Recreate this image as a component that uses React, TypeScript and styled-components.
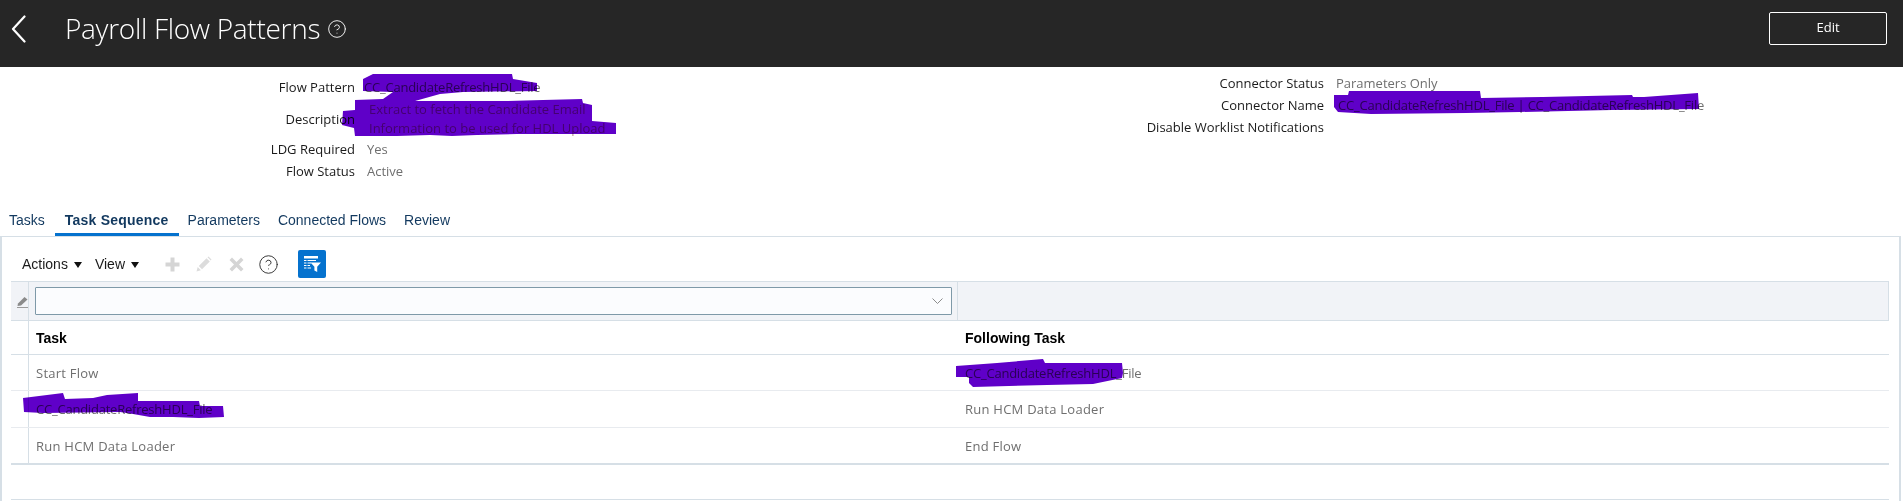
import React from 'react'
import styled, { createGlobalStyle } from 'styled-components'
import { HelpCircle } from 'lucide-react'

const Global = createGlobalStyle`
  html, body { margin: 0; padding: 0; background: #fff; }
  body { font-family: "Liberation Sans", Arial, sans-serif; }
`

const Page = styled.div`
  width: 1903px;
  height: 501px;
  overflow: hidden;
  position: relative;
`

const TitleBar = styled.header`
  height: 67px;
  background: #262626;
  display: flex;
  align-items: flex-start;
  color: #fff;
  padding: 0 16px 0 11px;
`

const Back = styled.svg`
  width: 15px;
  height: 28px;
  margin-top: 15px;
  flex: none;
`

const Title = styled.h1`
  margin: 10px 0 0 39px;
  font: 300 28px/36px "Open Sans", sans-serif;
  letter-spacing: -0.3px;
  color: #fff;
`

const TitleHelp = styled.span`
  display: flex;
  margin: 19px 0 0 7px;
`

const EditButton = styled.button`
  margin: 12px 0 0 auto;
  width: 118px;
  height: 33px;
  padding: 0 0 4px;
  background: transparent;
  border: 1px solid #fff;
  border-radius: 2px;
  color: #fff;
  font: 400 13px "Open Sans", sans-serif;
`

const Summary = styled.section`
  height: 142px;
  display: flex;
`

const FormColumn = styled.div<{ $width: number; $top: number; $labelWidth: number }>`
  width: ${(p) => p.$width}px;
  padding-top: ${(p) => p.$top}px;
  flex: none;
  --label-width: ${(p) => p.$labelWidth}px;
`

const FormRow = styled.div<{ $height: number }>`
  display: flex;
  align-items: center;
  gap: 12px;
  height: ${(p) => p.$height}px;
  font: 400 13px "Open Sans", sans-serif;
`

const Label = styled.div`
  width: var(--label-width);
  text-align: right;
  color: #1a1a1a;
  flex: none;
`

const Value = styled.div<{ $indent?: number; $hidden?: boolean }>`
  color: ${(p) => (p.$hidden ? '#b89090' : '#6f6f6f')};
  line-height: 19px;
  white-space: nowrap;
  margin-left: ${(p) => p.$indent ?? 0}px;
`

// the flow name is set tighter than the rest of the text
const FlowName = styled.span`
  letter-spacing: -0.22px;
`

const Scribble = styled.svg`
  position: absolute;
  left: 0;
  top: 0;
  pointer-events: none;
`

const Tabs = styled.nav`
  height: 27px;
  display: flex;
  align-items: flex-start;
  padding-left: 9px;
  font-size: 14px;
  line-height: 16px;
  color: #12395f;
  box-sizing: border-box;
`

const Tab = styled.div<{ $active?: boolean; $gap: number }>`
  height: 27px;
  box-sizing: border-box;
  padding-top: 3px;
  margin-right: ${(p) => p.$gap}px;
  font-weight: ${(p) => (p.$active ? 700 : 400)};
  letter-spacing: ${(p) => (p.$active ? '0.22px' : '0')};
  position: relative;
  ${(p) => p.$active && `
    &::after {
      content: '';
      position: absolute;
      left: -10px;
      right: -10px;
      bottom: 0;
      height: 3px;
      background: #0572ce;
    }
  `}
`

const Panel = styled.section`
  width: 1901px;
  height: 265px;
  border-top: 1px solid #d6dfe6;
  border-left: 2px solid #d6dfe6;
  border-right: 2px solid #d6dfe6;
  padding-left: 9px;
  box-sizing: border-box;
`

const Toolbar = styled.div`
  height: 44px;
  display: flex;
  align-items: center;
  padding: 10px 0 0 11px;
  font-size: 14px;
  color: #1a1a1a;
  box-sizing: border-box;
`

const Menu = styled.div<{ $gap: number }>`
  display: flex;
  align-items: center;
  gap: 6px;
  margin-right: ${(p) => p.$gap}px;
`

const Caret = styled.span`
  width: 0;
  height: 0;
  border-left: 4.5px solid transparent;
  border-right: 4.5px solid transparent;
  border-top: 6px solid #111;
  margin-top: 1px;
`

const ToolIcon = styled.svg<{ $gap: number; $size: number }>`
  width: ${(p) => p.$size}px;
  height: ${(p) => p.$size}px;
  flex: none;
  margin-right: ${(p) => p.$gap}px;
`

const ToolHelp = styled.span`
  display: flex;
  margin-left: -1px;
`

const FilterButton = styled.div`
  width: 28px;
  height: 28px;
  background: #0572ce;
  border-radius: 2px;
  display: flex;
  align-items: center;
  justify-content: center;
  margin-left: 19px;
`

const Table = styled.div`
  width: 1878px;
`

const gridCols = '18px 929px 1fr'

const QueryRow = styled.div`
  display: grid;
  grid-template-columns: ${gridCols};
  height: 40px;
  background: #f1f3f7;
  border-top: 1px solid #d6dfe6;
  border-bottom: 1px solid #d6dfe6;
  border-right: 1px solid #d6dfe6;
  box-sizing: border-box;
`

const QueryGutter = styled.div`
  border-right: 1px solid #d6dfe6;
  display: flex;
  align-items: center;
  justify-content: flex-end;
`

const QueryCell = styled.div`
  border-right: 1px solid #d6dfe6;
  padding: 5px 5px 0 6px;
  box-sizing: border-box;
`

const QueryInput = styled.div`
  height: 28px;
  border: 1px solid #7e99a8;
  border-radius: 1px;
  background: #fbfcfe;
  box-sizing: border-box;
  display: flex;
  align-items: center;
  justify-content: flex-end;
  padding-right: 8px;
`

const Row = styled.div<{ $height: number; $heavy?: boolean }>`
  display: grid;
  grid-template-columns: ${gridCols};
  height: ${(p) => p.$height}px;
  box-sizing: border-box;
  border-bottom: ${(p) => (p.$heavy ? '2px solid #d6dfe6' : '1px solid #e8ebef')};
  font: 400 13px "Open Sans", sans-serif;
  letter-spacing: 0.25px;
  align-items: center;
  color: #6f6f6f;
`

const HeadRow = styled(Row)`
  border-bottom: 1px solid #d6dfe6;
  font: 700 14px "Liberation Sans", Arial, sans-serif;
  letter-spacing: 0;
  color: #000;
`

const Gutter = styled.div`
  height: 100%;
  border-right: 1px solid #d6dfe6;
`

const Cell = styled.div`
  padding-left: 7px;
`

const Footer = styled.div`
  margin-top: 34px;
  border-top: 1px solid #d6dfe6;
`

const purple = '#5f00c8'

const scribbles = [
  // flow pattern and description
  'M363 79 L373 74 L512 74 L513 79 L537 83 L537 91 L463 92 L440 94 L415 101 L440 101 L507 101 L543 100 L582 99 L583 103 L592 105 L592 121 L616 123 L616 134 L543 134 L517 134 L477 135 L452 136 L430 135 L397 136 L355 136 L354 128 L342 125 L343 111 L355 110 L355 100 L383 99 L393 92 L363 91 Z',
  // connector name
  'M1334 95 L1348 95 L1349 91 L1480 91 L1481 98 L1543 97 L1632 95 L1633 97 L1644 97 L1698 93 L1699 109 L1612 110 L1520 112 L1466 113 L1371 114 L1338 112 L1334 107 Z',
  // following task
  'M956 366 L997 363 L1043 359 L1045 363 L1122 363 L1123 373 L1122 378 L1093 384 L1047 385 L973 387 L969 383 L969 377 L956 377 Z',
  // task
  'M23 398 L63 393 L65 399 L93 398 L107 395 L138 393 L138 401 L199 401 L200 406 L223 406 L224 417 L199 418 L173 417 L150 417 L133 414 L120 412 L43 413 L24 412 Z',
]

const App = () => {
  return (
    <Page>
      <Global />
      <TitleBar>
        <Back viewBox="0 0 15 28" fill="none">
          <path d="M13.5 1.5 L2 14 L13.5 26.5" stroke="#fff" strokeWidth="2.2" strokeLinecap="round" strokeLinejoin="round" />
        </Back>
        <Title>Payroll Flow Patterns</Title>
        <TitleHelp>
          <HelpCircle size={20} strokeWidth={1.1} color="#fff" />
        </TitleHelp>
        <EditButton>Edit</EditButton>
      </TitleBar>

      <Summary>
        <FormColumn $width={1000} $top={9} $labelWidth={355}>
          <FormRow $height={22}>
            <Label>Flow Pattern</Label>
            <Value $indent={-3}>
              <FlowName>CC_CandidateRefreshHDL_File</FlowName>
            </Value>
          </FormRow>
          <FormRow $height={41}>
            <Label>Description</Label>
            <Value $indent={2} $hidden>
              Extract to fetch the Candidate Email
              <br />
              Information to be used for HDL Upload
            </Value>
          </FormRow>
          <FormRow $height={20}>
            <Label>LDG Required</Label>
            <Value>Yes</Value>
          </FormRow>
          <FormRow $height={24}>
            <Label>Flow Status</Label>
            <Value>Active</Value>
          </FormRow>
        </FormColumn>
        <FormColumn $width={900} $top={5} $labelWidth={324}>
          <FormRow $height={22}>
            <Label>Connector Status</Label>
            <Value>Parameters Only</Value>
          </FormRow>
          <FormRow $height={22}>
            <Label>Connector Name</Label>
            <Value $indent={2}>
              <FlowName>CC_CandidateRefreshHDL_File | CC_CandidateRefreshHDL_File</FlowName>
            </Value>
          </FormRow>
          <FormRow $height={22}>
            <Label>Disable Worklist Notifications</Label>
          </FormRow>
        </FormColumn>
      </Summary>

      <Tabs>
        <Tab $gap={20}>Tasks</Tab>
        <Tab $active $gap={19}>Task Sequence</Tab>
        <Tab $gap={18}>Parameters</Tab>
        <Tab $gap={18}>Connected Flows</Tab>
        <Tab $gap={0}>Review</Tab>
      </Tabs>

      <Panel>
        <Toolbar>
          <Menu $gap={13}>
            Actions <Caret />
          </Menu>
          <Menu $gap={26}>
            View <Caret />
          </Menu>
          <ToolIcon $size={15} $gap={16} viewBox="0 0 15 15">
            <path d="M5.5 0.5h4v5h5v4h-5v5h-4v-5h-5v-4h5z" fill="#d5d5d5" />
          </ToolIcon>
          <ToolIcon $size={16} $gap={17} viewBox="0 0 16 16">
            <path d="M0.5 15.5l1.2-4.4 3.2 3.2zM2.8 10L10.500 2.200l3.300 3.300L6 13.200zM11.500 1.200l1-0.700 3 3-0.700 1z" fill="#dcdcdc" />
          </ToolIcon>
          <ToolIcon $size={15} $gap={15} viewBox="0 0 15 15">
            <path d="M0.500 3L3 0.500l4.500 4.500L12 0.500 14.500 3 10 7.500l4.500 4.500L12 14.500 7.500 10 3 14.500 0.500 12 5 7.500z" fill="#d5d5d5" />
          </ToolIcon>
          <ToolHelp>
            <HelpCircle size={21} strokeWidth={1.1} color="#333" />
          </ToolHelp>
          <FilterButton>
            <svg width="17" height="16" viewBox="0 0 17 16">
              <path d="M0 0h14v2.500H0zM0 4h2.500v1H0zM3.500 4H12v1H3.500zM0 6.500h2.500v1H0zM3.500 6.500H7v1H3.500zM0 9h2.500v1H0zM3.500 9H6v1H3.500zM0 11.500h2.500v1H0zM3.500 11.500H7v1H3.500z" fill="#fff" />
              <path d="M6.500 6.500H17l-3.800 4.200V16l-2.800-1.500v-3.800z" fill="#fff" />
            </svg>
          </FilterButton>
        </Toolbar>
        <Table>
          <QueryRow>
            <QueryGutter>
              <svg width="11" height="13" viewBox="0 0 11 13">
                <path d="M1 8.500 L7.500 2 L10.500 4.500 L4 10.500 L0.500 11 Z" fill="#8a8a8a" />
                <path d="M0 12.500h11" stroke="#9a9a9a" strokeWidth="1" />
              </svg>
            </QueryGutter>
            <QueryCell>
              <QueryInput>
                <svg width="11" height="6" viewBox="0 0 11 6" fill="none">
                  <path d="M0.500 0.500l5 5 5-5" stroke="#8c8c8c" strokeWidth="1" />
                </svg>
              </QueryInput>
            </QueryCell>
            <div />
          </QueryRow>
          <HeadRow $height={34}>
            <Gutter />
            <Cell>Task</Cell>
            <Cell>Following Task</Cell>
          </HeadRow>
          <Row $height={36}>
            <Gutter />
            <Cell>Start Flow</Cell>
            <Cell>
              <FlowName>CC_CandidateRefreshHDL_File</FlowName>
            </Cell>
          </Row>
          <Row $height={37}>
            <Gutter />
            <Cell>
              <FlowName>CC_CandidateRefreshHDL_File</FlowName>
            </Cell>
            <Cell>Run HCM Data Loader</Cell>
          </Row>
          <Row $height={37} $heavy>
            <Gutter />
            <Cell>Run HCM Data Loader</Cell>
            <Cell>End Flow</Cell>
          </Row>
          <Footer />
        </Table>
      </Panel>

      <Scribble width="1903" height="501" viewBox="0 0 1903 501">
        {scribbles.map((d) => (
          <path key={d} d={d} fill={purple} style={{ mixBlendMode: 'multiply' }} />
        ))}
      </Scribble>
    </Page>
  )
}

export default App
